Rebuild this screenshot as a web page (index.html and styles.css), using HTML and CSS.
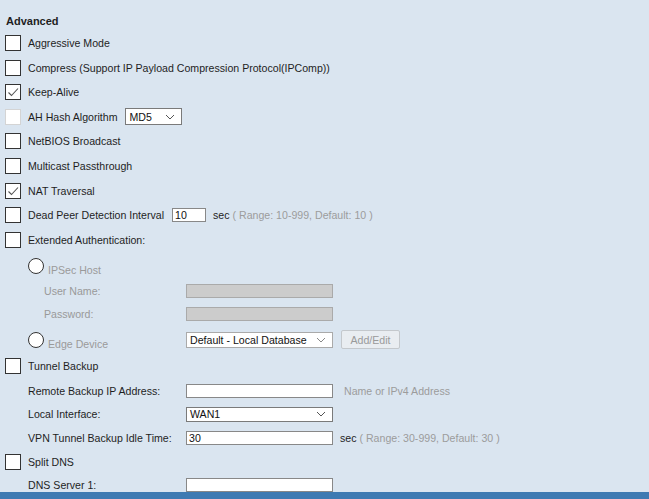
FILE: index.html
```html
<!DOCTYPE html>
<html>
<head>
<meta charset="utf-8">
<link rel="stylesheet" href="styles.css">
</head>
<body>
<div class="panel">
  <div class="title">Advanced</div>

  <div class="row"><span class="cb"></span><span class="lbl">Aggressive Mode</span></div>
  <div class="row"><span class="cb"></span><span class="lbl">Compress (Support IP Payload Compression Protocol(IPComp))</span></div>
  <div class="row"><span class="cb"><svg width="14" height="14" viewBox="0 0 14 14"><path d="M2.5 7.5 L5.5 10.5 L12 3.5" fill="none" stroke="#555" stroke-width="1.1"/></svg></span><span class="lbl">Keep-Alive</span></div>
  <div class="row"><span class="cb dis"></span><span class="lbl">AH Hash Algorithm</span>
    <span class="sel sel-sm"><span>MD5</span><svg class="chev" width="10" height="6" viewBox="0 0 10 6"><path d="M1 1 L5 5 L9 1" fill="none" stroke="#555" stroke-width="1"/></svg></span>
  </div>
  <div class="row"><span class="cb"></span><span class="lbl">NetBIOS Broadcast</span></div>
  <div class="row"><span class="cb"></span><span class="lbl">Multicast Passthrough</span></div>
  <div class="row"><span class="cb"><svg width="14" height="14" viewBox="0 0 14 14"><path d="M2.5 7.5 L5.5 10.5 L12 3.5" fill="none" stroke="#555" stroke-width="1.1"/></svg></span><span class="lbl">NAT Traversal</span></div>
  <div class="row"><span class="cb"></span><span class="lbl">Dead Peer Detection Interval</span>
    <span class="inp inp-xs">10</span><span class="unit">sec</span><span class="hint">( Range: 10-999, Default: 10 )</span>
  </div>
  <div class="row"><span class="cb"></span><span class="lbl">Extended Authentication:</span></div>

  <div class="radio-row r-ipsec"><span class="rad"></span><span class="rlbl">IPSec Host</span></div>
  <div class="sub sub-dis s-user"><span class="slbl">User Name:</span><span class="inp inp-dis"></span></div>
  <div class="sub sub-dis s-pass"><span class="slbl">Password:</span><span class="inp inp-dis"></span></div>
  <div class="radio-row r-edge"><span class="rad"></span><span class="rlbl">Edge Device</span>
    <span class="sel sel-wide"><span>Default - Local Database</span><svg class="chev" width="10" height="6" viewBox="0 0 10 6"><path d="M1 1 L5 5 L9 1" fill="none" stroke="#888" stroke-width="1"/></svg></span>
    <span class="btn">Add/Edit</span>
  </div>

  <div class="row r-tunnel"><span class="cb"></span><span class="lbl">Tunnel Backup</span></div>
  <div class="sub"><span class="flbl">Remote Backup IP Address:</span><span class="inp"></span><span class="hint hint-far">Name or IPv4 Address</span></div>
  <div class="sub"><span class="flbl">Local Interface:</span>
    <span class="sel sel-wide2"><span>WAN1</span><svg class="chev" width="10" height="6" viewBox="0 0 10 6"><path d="M1 1 L5 5 L9 1" fill="none" stroke="#555" stroke-width="1"/></svg></span>
  </div>
  <div class="sub"><span class="flbl">VPN Tunnel Backup Idle Time:</span><span class="inp inp-l">30</span><span class="unit">sec</span><span class="hint">( Range: 30-999, Default: 30 )</span></div>
  <div class="row r-split"><span class="cb"></span><span class="lbl">Split DNS</span></div>
  <div class="sub"><span class="flbl">DNS Server 1:</span><span class="inp"></span></div>
</div>
<div class="footer"></div>
</body>
</html>
```

FILE: styles.css
```css
html, body {
  margin: 0;
  padding: 0;
  height: 100%;
  overflow: hidden;
}
body {
  background: #dae5f0;
  font-family: "Liberation Sans", Arial, sans-serif;
  font-size: 10.6px;
  color: #1e1e1e;
}
.panel {
  padding: 14px 0 0 5px;
  display: flex;
  flex-direction: column;
}
.title {
  font-weight: bold;
  font-size: 11px;
  height: 16.7px;
  line-height: 14px;
  padding-left: 1px;
}
.row {
  height: 24.6px;
  display: flex;
  align-items: center;
}
.cb {
  width: 14px;
  height: 14px;
  border: 1px solid #333;
  background: #fff;
  flex: none;
  display: flex;
  align-items: center;
  justify-content: center;
}
.cb.dis {
  border-color: #d4d4d4;
}
.lbl {
  margin-left: 7px;
  white-space: nowrap;
}
.sel {
  display: flex;
  align-items: center;
  justify-content: space-between;
  background: #fff;
  border: 1px solid #7a7a7a;
  box-sizing: border-box;
  padding: 0 6px 0 4px;
  color: #111;
}
.sel-sm {
  margin-left: 7px;
  width: 57px;
  height: 17px;
}
.sel-wide {
  width: 147px;
  height: 16px;
  border-color: #aaa;
  padding-left: 3px;
  flex: none;
}
.sel-wide2 {
  width: 147px;
  height: 15px;
  padding-left: 3px;
}
.chev { flex: none; }
.inp {
  display: flex;
  align-items: center;
  box-sizing: border-box;
  width: 147px;
  height: 14px;
  border: 1px solid #888;
  background: #fff;
  padding-left: 2px;
  color: #111;
  flex: none;
}
.inp-xs {
  margin-left: 8px;
  width: 34px;
}
.inp-dis {
  background: #cccccc;
  border-color: #aaa;
}
.unit {
  margin-left: 7px;
}
.hint {
  margin-left: 3px;
  color: #9c9c9c;
}
.hint-far { margin-left: 11px; }

.radio-row {
  display: flex;
  align-items: center;
  padding-left: 23px;
}
.rad {
  width: 14px;
  height: 14px;
  border: 1px solid #333;
  border-radius: 50%;
  background: #fff;
  flex: none;
}
.rlbl {
  margin-left: 4px;
  color: #9a9a9a;
  width: 138px;
  flex: none;
  position: relative;
  top: 4px;
}
.r-ipsec { height: 27.1px; }
.r-edge { height: 29px; }
.r-edge .btn { margin-left: 8px; }
.btn {
  box-sizing: border-box;
  width: 59px;
  height: 19px;
  border: 1px solid #c4c8cc;
  border-radius: 2px;
  background: #e9edf1;
  color: #9a9a9a;
  display: flex;
  align-items: center;
  justify-content: center;
  flex: none;
}
.sub {
  display: flex;
  align-items: center;
  height: 23.8px;
  padding-left: 23px;
}
.sub-dis { height: 23px; }
.slbl {
  color: #999;
  width: 142px;
  padding-left: 16px;
  flex: none;
}
.flbl {
  width: 158px;
  flex: none;
  white-space: nowrap;
}
.r-tunnel { height: 24.6px; }
.r-split { height: 23.4px; }
.footer {
  position: fixed;
  left: 0;
  right: 0;
  bottom: 0;
  height: 7px;
  background: #3e7ab2;
}
```
